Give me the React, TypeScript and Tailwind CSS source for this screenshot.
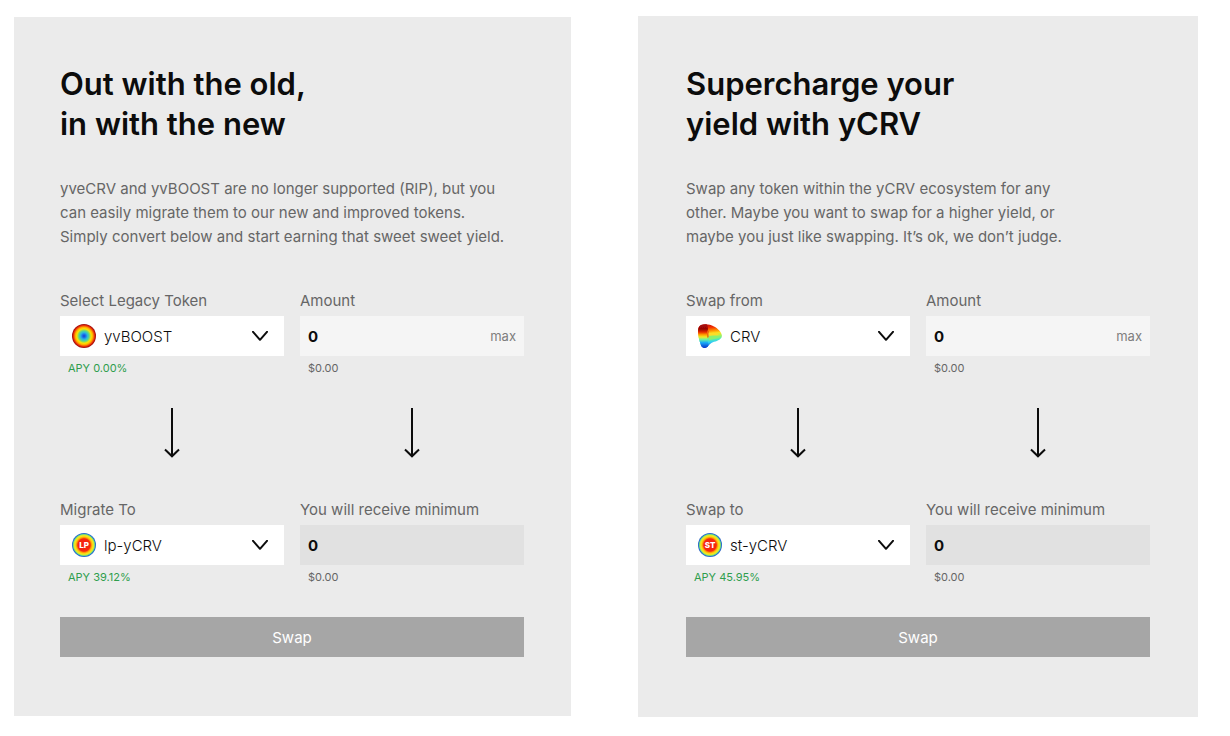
import { useId, useState, type ReactNode } from "react";

function BoostIcon() {
  return (
    <svg viewBox="0 0 24 24" className="h-6 w-6" aria-hidden="true">
      <defs>
        <radialGradient id="boost-rings">
          <stop offset="0" stopColor="#1240d0" />
          <stop offset="0.14" stopColor="#1a70e8" />
          <stop offset="0.28" stopColor="#2cb4e0" />
          <stop offset="0.4" stopColor="#4cd0a0" />
          <stop offset="0.5" stopColor="#98dc50" />
          <stop offset="0.6" stopColor="#ffe400" />
          <stop offset="0.74" stopColor="#ffa800" />
          <stop offset="0.84" stopColor="#f44c08" />
          <stop offset="0.93" stopColor="#c81408" />
          <stop offset="1" stopColor="#8c0a0a" />
        </radialGradient>
      </defs>
      <circle cx="12" cy="12" r="12" fill="url(#boost-rings)" />
    </svg>
  );
}

function CurveIcon() {
  return (
    <svg viewBox="0 0 24 24" className="h-6 w-6" aria-hidden="true">
      <defs>
        <linearGradient id="crv-body" x1="0.2" y1="0" x2="0.3" y2="1">
          <stop offset="0" stopColor="#c00d0d" />
          <stop offset="0.16" stopColor="#f02a00" />
          <stop offset="0.3" stopColor="#ff8c00" />
          <stop offset="0.42" stopColor="#ffe020" />
          <stop offset="0.52" stopColor="#b4f050" />
          <stop offset="0.66" stopColor="#5ceea8" />
          <stop offset="0.78" stopColor="#2fd0f4" />
          <stop offset="1" stopColor="#0848d8" />
        </linearGradient>
        <linearGradient id="crv-side" gradientUnits="userSpaceOnUse" x1="0" y1="0" x2="0" y2="24">
          <stop offset="0" stopColor="#a80808" />
          <stop offset="0.22" stopColor="#980606" />
          <stop offset="0.34" stopColor="#e82c04" />
          <stop offset="0.44" stopColor="#ff9a00" />
          <stop offset="0.54" stopColor="#f4e820" />
          <stop offset="0.65" stopColor="#6cf0a0" />
          <stop offset="0.78" stopColor="#18a8f8" />
          <stop offset="1" stopColor="#0830c8" />
        </linearGradient>
        <clipPath id="crv-shape">
          <path d="M3 1C7-.6 12 .3 16 2.500C20 4.700 23.500 8 23.900 11.500C24 15 20 16.500 16 17.800C12.500 19 11 21 9.800 22.600C8 24.600 4 24.400 3 21.500C1 16 0 11 0 7C0 4 1 2 3 1Z" />
        </clipPath>
        <filter id="crv-soft" x="-20%" y="-20%" width="140%" height="140%">
          <feGaussianBlur stdDeviation="0.6" />
        </filter>
      </defs>
      <g clipPath="url(#crv-shape)">
        <rect width="24" height="24" fill="url(#crv-body)" />
        <g filter="url(#crv-soft)">
          <path d="M-4-4H7C9-1 9.500 2 10 5C9.500 9 9 12 9.500 16L12 30H-4Z" fill="url(#crv-side)" />
          <path d="M10.500 6.500C9.500 9 9.500 11 10 13.500" fill="none" stroke="#f06a10" strokeWidth="1.500" />
          <path d="M11 9.500C14 8 19 8.500 21 11C18 12 14 12 11.500 13.500Z" fill="#ffdc28" />
          <path d="M11 12C14 11 18 11.500 23 12.500C19 15 14 15 11 16.500Z" fill="#8cf070" />
        </g>
      </g>
    </svg>
  );
}

function LockerIcon({ text }: { text: string }) {
  return (
    <svg viewBox="0 0 24 24" className="h-6 w-6" aria-hidden="true">
      <defs>
        <radialGradient id={`rings-${text}`}>
          <stop offset="0.52" stopColor="#f5260f" />
          <stop offset="0.59" stopColor="#ff7a08" />
          <stop offset="0.66" stopColor="#ffb808" />
          <stop offset="0.75" stopColor="#fae41c" />
          <stop offset="0.84" stopColor="#c4e83c" />
          <stop offset="0.9" stopColor="#58c890" />
          <stop offset="0.95" stopColor="#2474d4" />
          <stop offset="1" stopColor="#2458b8" />
        </radialGradient>
      </defs>
      <circle cx="12" cy="12" r="12" fill={`url(#rings-${text})`} />
      <text x="12" y="14.900" textAnchor="middle" fontSize="8" fontWeight="800" fill="#fff" fontFamily="Inter, sans-serif">
        {text}
      </text>
    </svg>
  );
}

function Chevron() {
  return (
    <svg viewBox="0 0 16 10" className="h-[10px] w-4" fill="none" stroke="#0c0c0c" strokeWidth="2" aria-hidden="true">
      <path d="M1 .800L8 8.800L15 .800" strokeLinecap="round" strokeLinejoin="round" />
    </svg>
  );
}

function ArrowDown() {
  return (
    <svg viewBox="0 0 16 50" className="h-[50px] w-4 justify-self-center" fill="none" stroke="#0c0c0c" strokeWidth="2" aria-hidden="true">
      <path d="M8 0V48M1 41.500L8 48.300L15 41.500" />
    </svg>
  );
}

type TokenFieldProps = { label: string; token: string; icon: ReactNode; apy?: string };

function TokenField({ label, token, icon, apy }: TokenFieldProps) {
  const id = useId();
  return (
    <div className="flex min-w-0 flex-col">
      <label htmlFor={id} className="pt-px pb-[3px] text-[15px] leading-6 whitespace-nowrap text-[#666666]">{label}</label>
      <div className="relative">
        <span className="pointer-events-none absolute inset-y-0 left-3 flex items-center">{icon}</span>
        <select id={id} className="block h-10 w-full appearance-none bg-white pt-0.5 pr-10 pl-11 text-[15px] font-light text-[#0c0c0c] outline-none">
          <option>{token}</option>
        </select>
        <span className="pointer-events-none absolute inset-y-0 right-4 flex items-center"><Chevron /></span>
      </div>
      <p className="mt-1 h-4 px-2 text-[11px] leading-4 text-[#2f9e4d]">{apy}</p>
    </div>
  );
}

function AmountField({ label, editable = false }: { label: string; editable?: boolean }) {
  const id = useId();
  const [value, setValue] = useState("0");
  return (
    <div className="flex min-w-0 flex-col">
      <label htmlFor={id} className="pt-px pb-[3px] text-[15px] leading-6 whitespace-nowrap text-[#666666]">{label}</label>
      <div className={`flex h-10 items-center px-2 ${editable ? "bg-[#f5f5f5]" : "bg-[#e1e1e1]"}`}>
        <input
          id={id}
          value={value}
          readOnly={!editable}
          onChange={(e) => setValue(e.target.value)}
          className="h-full w-full min-w-0 flex-1 bg-transparent text-[15px] font-bold text-[#0c0c0c] outline-none"
        />
        {editable && <button type="button" className="pt-px text-[13px] text-[#7e7e7e]">max</button>}
      </div>
      <p className="mt-1 h-4 px-2 text-[11px] leading-4 text-[#666666]">$0.00</p>
    </div>
  );
}

type CardProps = {
  title: string[];
  body: string[];
  from: TokenFieldProps;
  to: TokenFieldProps;
  className: string;
};

function SwapCard({ title, body, from, to, className }: CardProps) {
  return (
    <section className={`bg-[#ebebeb] ${className}`}>
      <h2 className="text-[31px] leading-10 font-semibold text-[#0c0c0c]">
        {title.map((line) => <span key={line} className="block">{line}</span>)}
      </h2>
      <p className="mt-[33px] text-[15px] leading-6 text-[#666666]">
        {body.map((line) => <span key={line} className="block whitespace-nowrap">{line}</span>)}
      </p>
      <form className="mt-[39px]" onSubmit={(e) => e.preventDefault()}>
        <div className="grid grid-cols-2 gap-x-4">
          <TokenField {...from} />
          <AmountField label="Amount" editable />
        </div>
        <div className="mt-8 mb-[39px] grid grid-cols-2 gap-x-4">
          <ArrowDown />
          <ArrowDown />
        </div>
        <div className="grid grid-cols-2 gap-x-4">
          <TokenField {...to} />
          <AmountField label="You will receive minimum" />
        </div>
        <button type="submit" className="mt-8 h-10 w-full bg-[#a6a6a6] pt-0.5 text-[15px] text-white">Swap</button>
      </form>
    </section>
  );
}

export default function App() {
  return (
    <main className="grid grid-cols-[557fr_560fr] items-center gap-x-[67px] bg-white pt-4 pr-8 pb-4 pl-[14px] font-[Inter,sans-serif]">
      <SwapCard
        className="pt-[47px] pr-[47px] pb-[59px] pl-[46px]"
        title={["Out with the old,", "in with the new"]}
        body={[
          "yveCRV and yvBOOST are no longer supported (RIP), but you",
          "can easily migrate them to our new and improved tokens.",
          "Simply convert below and start earning that sweet sweet yield.",
        ]}
        from={{ label: "Select Legacy Token", token: "yvBOOST", icon: <BoostIcon />, apy: "APY 0.00%" }}
        to={{ label: "Migrate To", token: "lp-yCRV", icon: <LockerIcon text="LP" />, apy: "APY 39.12%" }}
      />
      <SwapCard
        className="px-12 pt-12 pb-[60px]"
        title={["Supercharge your", "yield with yCRV"]}
        body={[
          "Swap any token within the yCRV ecosystem for any",
          "other. Maybe you want to swap for a higher yield, or",
          "maybe you just like swapping. It’s ok, we don’t judge.",
        ]}
        from={{ label: "Swap from", token: "CRV", icon: <CurveIcon /> }}
        to={{ label: "Swap to", token: "st-yCRV", icon: <LockerIcon text="ST" />, apy: "APY 45.95%" }}
      />
    </main>
  );
}
